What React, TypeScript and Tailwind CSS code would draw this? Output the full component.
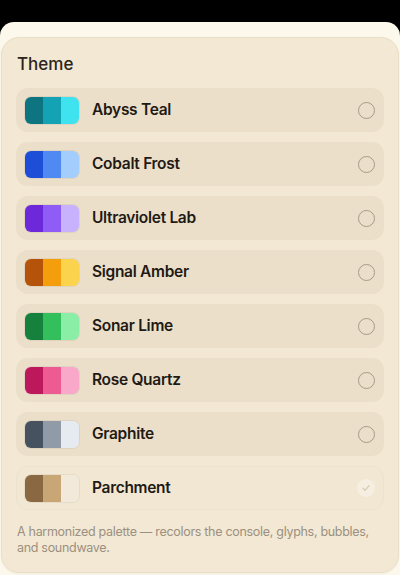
import React, { useState } from "react";

const themes = [
    { name: "Abyss Teal", colors: ["#0e7480", "#13a3b4", "#3fe3ef"] },
    { name: "Cobalt Frost", colors: ["#1d4ed8", "#4f8af2", "#a3cdfd"] },
    { name: "Ultraviolet Lab", colors: ["#6d28d9", "#8f5cf6", "#c8b2fd"] },
    { name: "Signal Amber", colors: ["#b45309", "#f59e0b", "#fcd34d"] },
    { name: "Sonar Lime", colors: ["#16803d", "#33bf5c", "#8aeea7"] },
    { name: "Rose Quartz", colors: ["#be185d", "#ee5a92", "#f9a8c9"] },
    { name: "Graphite", colors: ["#475260", "#919ba7", "#e6ebf2"] },
    { name: "Parchment", colors: ["#8a6842", "#c9a676", "#f3e9da"] },
];

export default function App() {
    const [selected, setSelected] = useState("Parchment");

    return (
        <div className="min-h-[575px] bg-black pt-[22px]" style={{ fontFamily: "Inter, 'Noto Sans', sans-serif" }}>
            <div className="min-h-[553px] rounded-t-[14px] bg-[#fdf8ec] pt-[15px]">
                <div className="mx-px rounded-[18px] border border-[#e9dec6] bg-[#f3e8d3] px-[14px] pt-[15px] pb-[16px] shadow-[0_1px_2px_rgba(120,100,60,0.08)]">
                    <h2 className="mb-[13px] pl-px text-[17px] font-medium leading-[22px] text-[#2a241b]">Theme</h2>
                    <div className="flex flex-col gap-[10px]">
                        {themes.map((t) => {
                            const active = t.name === selected;
                            return (
                                <button
                                    key={t.name}
                                    onClick={() => setSelected(t.name)}
                                    className={`flex h-[44px] items-center rounded-[12px] border pl-[7px] pr-[8px] text-left ${active ? "border-[#ece2cd] bg-[#f2e7d2]" : "border-transparent bg-[#ebdfca]"}`}
                                >
                                    <div className="flex h-[29px] w-[56px] overflow-hidden rounded-[7px] border border-black/5">
                                        {t.colors.map((c) => (
                                            <div key={c} className="flex-1" style={{ backgroundColor: c }} />
                                        ))}
                                    </div>
                                    <span className="ml-[12px] flex-1 text-[15.5px] font-semibold tracking-[-0.3px] text-[#1f1a14]">{t.name}</span>
                                    {active ? (
                                        <span className="flex h-[18px] w-[18px] items-center justify-center rounded-full bg-[#f6efe1]">
                                            <svg width="10" height="10" viewBox="0 0 10 10" fill="none">
                                                <path d="M2 5.2l2 2 4-4.4" stroke="#d8ccb6" strokeWidth="1.3" strokeLinecap="round" strokeLinejoin="round" />
                                            </svg>
                                        </span>
                                    ) : (
                                        <span className="h-[17px] w-[17px] rounded-full border-[1.5px] border-[#a69b8a]" />
                                    )}
                                </button>
                            );
                        })}
                    </div>
                    <p className="mt-[14px] pl-px text-[12.5px] leading-[16px] tracking-[-0.3px] text-[#9b9081]">
                        A harmonized palette — recolors the console, glyphs, bubbles, and soundwave.
                    </p>
                </div>
            </div>
        </div>
    );
}
